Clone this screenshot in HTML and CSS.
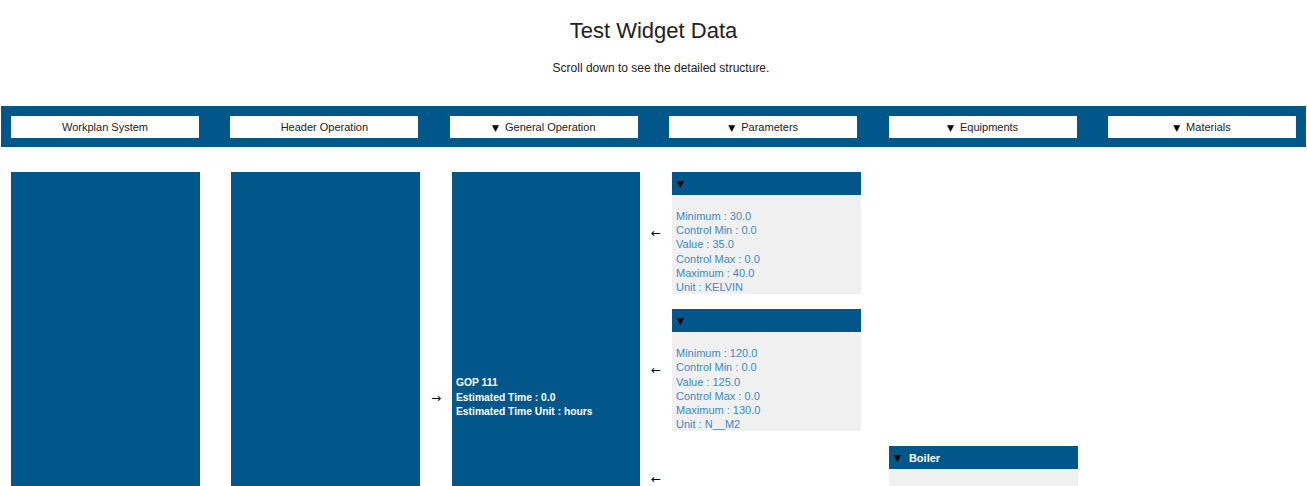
FILE: index.html
```html
<!DOCTYPE html>
<html lang="en">
<head>
<meta charset="utf-8">
<title>Test Widget Data</title>
<link rel="stylesheet" href="styles.css">
</head>
<body>
<h1 class="title">Test Widget Data</h1>
<p class="subtitle">Scroll down to see the detailed structure.</p>

<div class="navbar">
  <div class="nav-btn">Workplan System</div>
  <div class="nav-btn">Header Operation</div>
  <div class="nav-btn"><span class="tri">▼</span> General Operation</div>
  <div class="nav-btn"><span class="tri">▼</span> Parameters</div>
  <div class="nav-btn"><span class="tri">▼</span> Equipments</div>
  <div class="nav-btn"><span class="tri">▼</span> Materials</div>
</div>

<div class="tree">
  <div class="node node-wide"></div>
  <div class="node node-wide node-second"></div>
  <div class="link link-right">→</div>
  <div class="node gop">
    <div class="gop-text">
      <div>GOP 111</div>
      <div>Estimated Time : 0.0</div>
      <div>Estimated Time Unit : hours</div>
    </div>
  </div>
  <div class="children">
    <div class="child-row">
      <div class="link">←</div>
      <div class="card">
        <div class="card-head"><span class="tri">▼</span></div>
        <div class="card-body">
          <div>Minimum : 30.0</div>
          <div>Control Min : 0.0</div>
          <div>Value : 35.0</div>
          <div>Control Max : 0.0</div>
          <div>Maximum : 40.0</div>
          <div>Unit : KELVIN</div>
        </div>
      </div>
    </div>
    <div class="child-row">
      <div class="link">←</div>
      <div class="card">
        <div class="card-head"><span class="tri">▼</span></div>
        <div class="card-body">
          <div>Minimum : 120.0</div>
          <div>Control Min : 0.0</div>
          <div>Value : 125.0</div>
          <div>Control Max : 0.0</div>
          <div>Maximum : 130.0</div>
          <div>Unit : N__M2</div>
        </div>
      </div>
    </div>
    <div class="child-row">
      <div class="link">←</div>
      <div class="card card-equip">
        <div class="card-head"><span class="tri">▼</span><span class="head-name">Boiler</span></div>
        <div class="card-body card-body-empty"></div>
      </div>
    </div>
  </div>
</div>
</body>
</html>
```

FILE: styles.css
```css
html {
  scrollbar-width: none;
}
html::-webkit-scrollbar {
  display: none;
}
body {
  margin: 0;
  font-family: "Liberation Sans", Arial, sans-serif;
  color: #222;
  background: #fff;
}
.title {
  margin: 19px 0 0;
  font-size: 22px;
  line-height: 24px;
  font-weight: normal;
  text-align: center;
}
.subtitle {
  margin: 18px 0 0;
  padding-left: 15px;
  font-size: 12px;
  line-height: 14px;
  text-align: center;
}
.navbar {
  margin: 31px 0 0 1px;
  width: 1305px;
  box-sizing: border-box;
  padding: 10px 10px 9px;
  background: #02578a;
  display: grid;
  grid-template-columns: repeat(6, 188px);
  column-gap: 31.4px;
}
.nav-btn {
  height: 22px;
  background: #fff;
  font-size: 11px;
  line-height: 22px;
  text-align: center;
  color: #222;
}
.tri {
  font-family: "DejaVu Sans", sans-serif;
  font-size: 9px;
  color: #000;
}
.nav-btn .tri {
  margin-right: 3px;
}
.tree {
  display: flex;
  align-items: stretch;
  margin-top: 25px;
  padding-left: 11px;
}
.node {
  background: #02578a;
}
.node-wide {
  width: 189px;
}
.node-second {
  margin-left: 31px;
}
.link {
  width: 32px;
  display: flex;
  align-items: center;
  justify-content: center;
  font-family: "DejaVu Sans", sans-serif;
  font-size: 12px;
  color: #000;
}
.gop {
  width: 188px;
  display: flex;
  align-items: center;
}
.gop-text {
  padding-left: 4px;
  color: #fff;
  font-weight: bold;
  font-size: 10.3px;
  line-height: 14.5px;
}
.children {
  display: flex;
  flex-direction: column;
  gap: 15px;
  min-height: 452px;
}
.child-row {
  display: flex;
  align-items: stretch;
}
.card {
  width: 189px;
  display: flex;
  flex-direction: column;
}
.card-equip {
  margin-left: 217px;
}
.card-head {
  height: 23px;
  background: #02578a;
  display: flex;
  align-items: center;
  padding-left: 5px;
  gap: 8px;
}
.head-name {
  color: #fff;
  font-weight: bold;
  font-size: 11px;
}
.card-body {
  background: #f0f0f0;
  padding: 14px 4px 0;
  font-size: 11px;
  line-height: 14.2px;
  color: #3b8ac6;
}
.card-body-empty {
  height: 42px;
  padding: 0;
}
```
